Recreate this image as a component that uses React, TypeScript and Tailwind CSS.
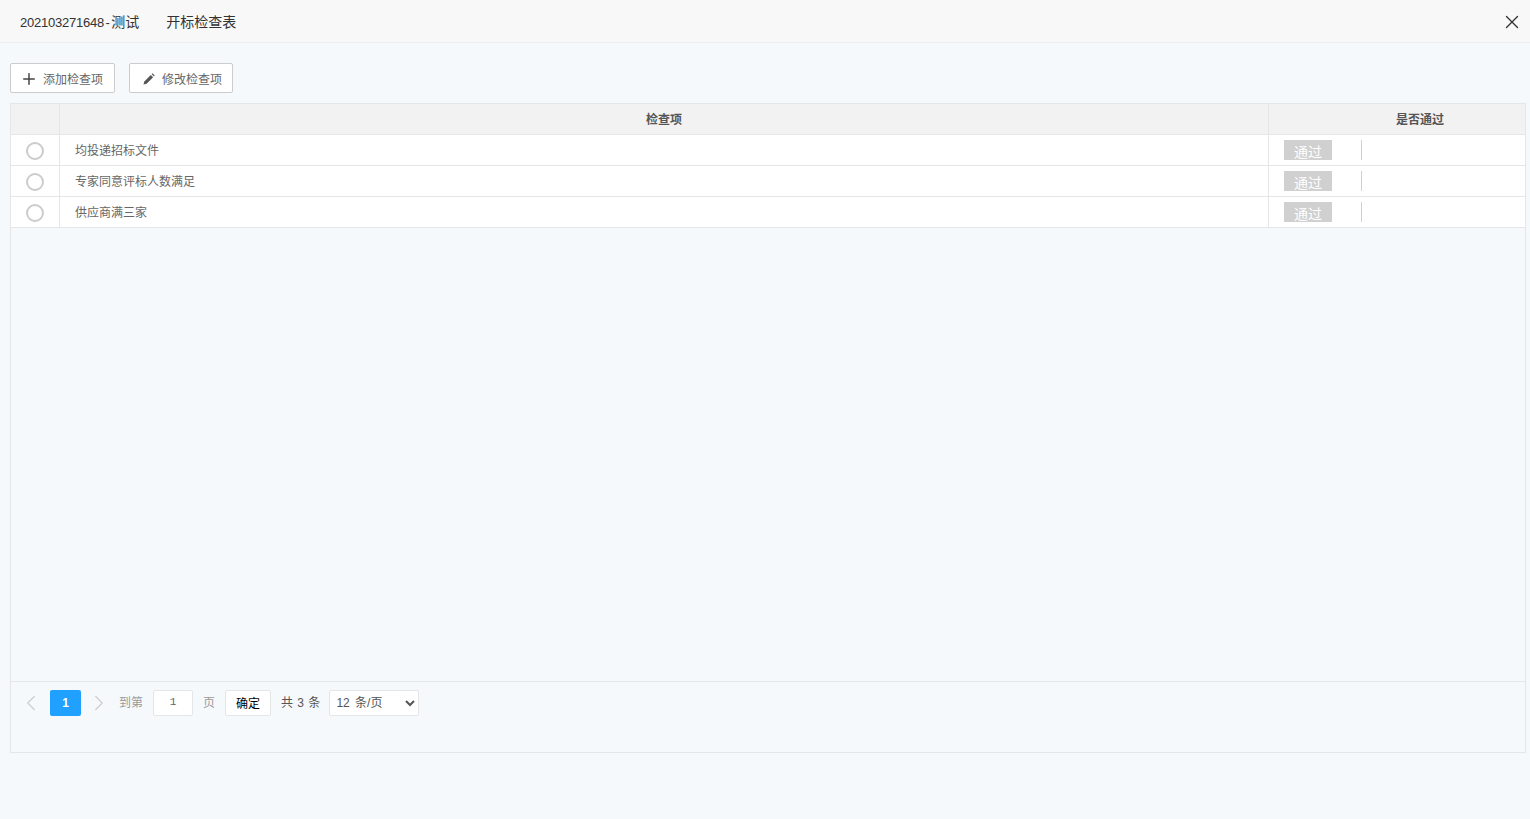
import { ChevronLeft, ChevronRight, Plus, X } from "lucide-react";

const rows = ["均投递招标文件", "专家同意评标人数满足", "供应商满三家"];
const font = "font-['Liberation_Sans','Noto_Sans_CJK_SC',sans-serif]";

function PencilIcon() {
  return (
    <svg className="w-[12px] h-[12px] mt-[1px]" viewBox="0 0 12 12" fill="#555">
      <path d="M0.5 11.5 L1.3 8.4 L7.8 1.9 L10.1 4.2 L3.6 10.7 Z" />
      <path d="M8.6 1.1 L9.5 0.3 L11.7 2.5 L10.9 3.4 Z" />
    </svg>
  );
}

export default function App() {
  return (
    <div className={`w-[1530px] h-[819px] overflow-hidden bg-[#f5f9fc] ${font}`}>
      <div className="h-[43px] bg-[#f8f8f8] border-b border-[#eceef0] flex items-center pl-[20px] pr-[7px] text-[#333]">
        <span className="text-[14px] pt-[2px]">
          <span className="text-[13px] tracking-[-0.23px]">202103271648</span>
          <span className="text-[13px] mx-[1.5px]">-</span>测试
        </span>
        <span className="text-[14px] pt-[2px] ml-[27px]">开标检查表</span>
        <X className="ml-auto mt-[2px] text-[#333]" size={22} strokeWidth={1.5} />
      </div>

      <div className="pl-[10px] pr-[4px]">
        <div className="flex gap-[14px] pt-[20px] pb-[10px]">
          <button className="w-[105px] h-[30px] flex items-center pl-[12px] bg-white border border-[#cccccc] rounded-[2px] text-[12px] text-[#666]">
            <Plus size={18} strokeWidth={2} className="-ml-[3px] mt-[2px] text-[#444]" />
            <span className="ml-[5px] pt-[3px]">添加检查项</span>
          </button>
          <button className="w-[104px] h-[30px] flex items-center pl-[13px] bg-white border border-[#cccccc] rounded-[2px] text-[12px] text-[#666]">
            <PencilIcon />
            <span className="ml-[7px] pt-[3px]">修改检查项</span>
          </button>
        </div>

        <div className="h-[650px] border border-[#e4e6e8] flex flex-col">
          <div className="h-[31px] flex shrink-0 bg-[#f2f2f2] border-b border-[#e4e6e8] text-[12px] font-bold text-[#555]">
            <div className="w-[49px] border-r border-[#e4e6e8]" />
            <div className="w-[1209px] border-r border-[#e4e6e8] flex items-center justify-center pt-[2px]">检查项</div>
            <div className="flex-1 flex items-center justify-center pt-[2px] pl-[46px]">是否通过</div>
          </div>

          {rows.map((row) => (
            <div key={row} className="h-[31px] flex shrink-0 bg-white border-b border-[#e4e6e8] text-[12px] text-[#666]">
              <div className="w-[49px] border-r border-[#e4e6e8] flex items-center justify-center pt-[2px]">
                <span className="w-[18px] h-[18px] rounded-full border-2 border-[#cccccc] bg-white" />
              </div>
              <div className="w-[1209px] border-r border-[#e4e6e8] flex items-center pl-[15px] pt-[2px]">{row}</div>
              <div className="flex-1 flex items-center pl-[15px]">
                <span className="w-[48px] h-[20px] bg-[#d0d0d0] text-white text-[14px] leading-[24px] text-center overflow-hidden">通过</span>
                <span className="ml-[29px] w-px h-[20px] bg-[#d0d0d0]" />
              </div>
            </div>
          ))}

          <div className="flex-1" />

          <div className="h-[71px] shrink-0 border-t border-[#e4e6e8] flex items-start pt-[7px] pl-[11px] text-[12px]">
            <div className="h-[27px] flex items-center">
              <ChevronLeft size={26} strokeWidth={1.2} className="-mx-[4px] text-[#cfcfcf]" />
              <span className="ml-[10px] w-[31px] h-[26px] rounded-[2px] bg-[#20a0ff] text-white font-bold flex items-center justify-center">1</span>
              <ChevronRight size={26} strokeWidth={1.2} className="ml-[5px] -mr-[4px] text-[#cfcfcf]" />
              <span className="ml-[11px] pt-[1px] text-[#999]">到第</span>
              <span className="ml-[10px] w-[40px] h-[26px] bg-white border border-[#e4e6e8] rounded-[2px] text-[#666] text-[11px] font-['Liberation_Mono',monospace] flex items-center justify-center">1</span>
              <span className="ml-[10px] pt-[1px] text-[#999]">页</span>
              <button className="ml-[10px] w-[46px] h-[26px] pt-[2px] bg-white border border-[#e4e6e8] rounded-[2px] text-black flex items-center justify-center">确定</button>
              <span className="ml-[10px] pt-[1px] text-[#555] [word-spacing:1px]">共 3 条</span>
              <select defaultValue="12" className="ml-[9px] w-[90px] h-[26px] pl-[2px] bg-white border border-[#e4e6e8] rounded-[2px] text-[#555] text-[12px] [word-spacing:2px]">
                <option value="12">12 条/页</option>
              </select>
            </div>
          </div>
        </div>
      </div>
    </div>
  );
}
